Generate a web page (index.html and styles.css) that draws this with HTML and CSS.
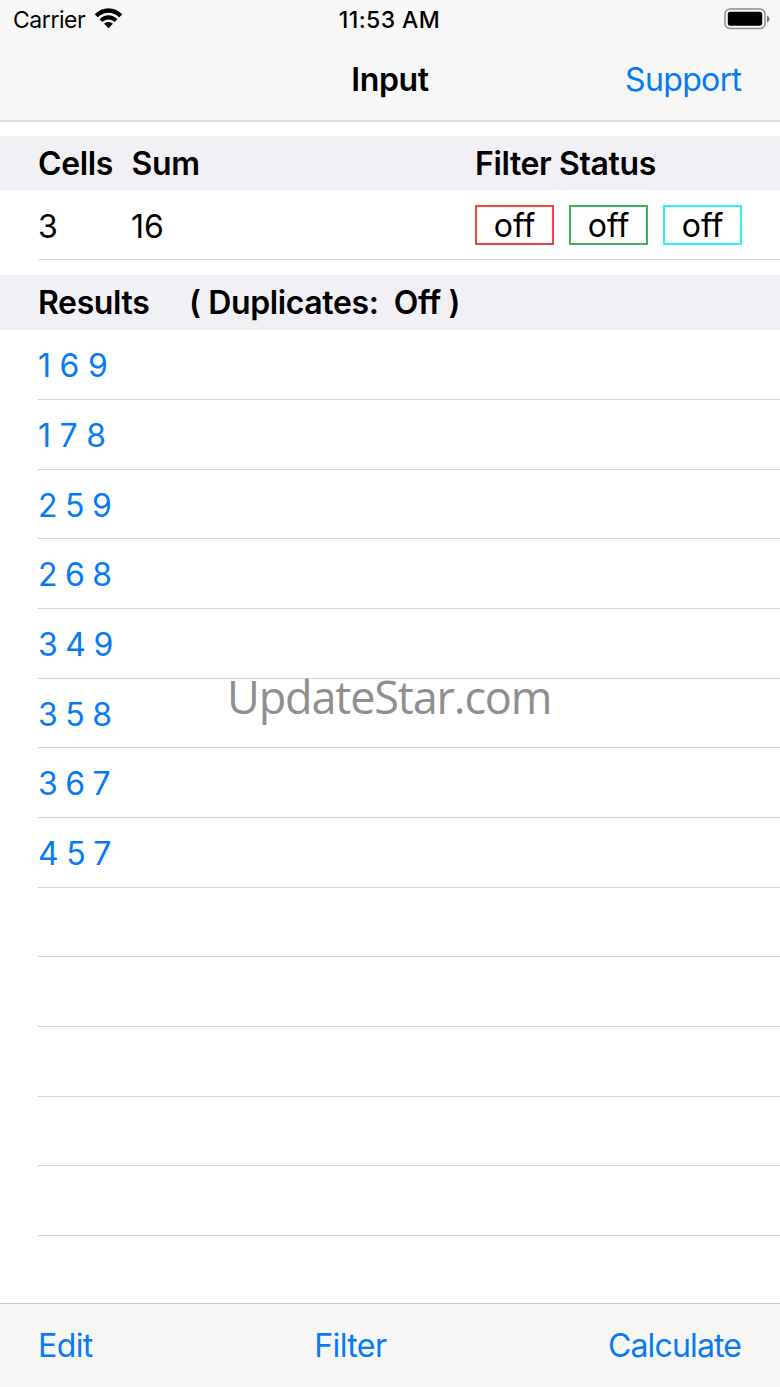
FILE: index.html
```html
<!DOCTYPE html>
<html lang="en">
<head>
<meta charset="utf-8">
<title>Input</title>
<link rel="stylesheet" href="styles.css">
</head>
<body>
<div class="screen">
  <header class="top">
    <div class="status">
      <div class="carrier"><span>Carrier</span>
        <svg class="wifi" width="29" height="21" viewBox="0 0 30 22"><path d="M.6 6.6C8.7-1.9 21.3-1.9 29.4 6.6L26.2 9.9C19.8 3.4 10.2 3.4 3.8 9.9Z"/><path d="M5.6 11.7C10.8 6.3 19.2 6.3 24.4 11.7L21.4 14.7C17.8 11.2 12.2 11.2 8.6 14.7Z"/><path d="M10.4 16.6C13 14 17 14 19.6 16.6L15 21.2Z"/></svg>
      </div>
      <div class="clock">11:53 AM</div>
      <svg class="battery" width="47" height="22" viewBox="0 0 47 22"><rect x="1" y="1" width="40" height="19.5" rx="5" fill="none" stroke="#8e8e8e" stroke-width="1.5"/><rect x="3.8" y="3.8" width="34.4" height="14" rx="2.5"/><path d="M43 7.5Q45.6 8.5 45.6 11T43 14.5Z" fill="#7c7c7c"/></svg>
    </div>
    <nav class="nav"><h1 class="title">Input</h1><a class="support">Support</a></nav>
  </header>
  <main class="content">
    <div class="head"><span class="cells">Cells</span><span class="sum">Sum</span><span class="filters">Filter Status</span></div>
    <div class="input-row"><span class="cells">3</span><span class="sum">16</span>
      <div class="filters boxes"><span class="box red">off</span><span class="box green">off</span><span class="box cyan">off</span></div>
    </div>
    <div class="head results-head"><span class="results">Results</span><span class="dup">( Duplicates:&nbsp; Off )</span></div>
    <ul class="list">
      <li class="one">1 6 9</li><li class="one">1 7 8</li><li>2 5 9</li><li>2 6 8</li><li>3 4 9</li><li>3 5 8</li><li>3 6 7</li><li>4 5 7</li>
      <li></li><li></li><li></li><li></li><li></li>
    </ul>
  </main>
  <footer class="toolbar"><a class="edit">Edit</a><a class="filter">Filter</a><a class="calc">Calculate</a></footer>
  <div class="watermark">UpdateStar.com</div>
</div>
</body>
</html>
```
FILE: styles.css
```css
* { box-sizing: border-box; }
body { margin: 0; background: #fff; color: #000; font: 400 32px/1.2 Inter, sans-serif; }
.screen { position: relative; width: 780px; height: 1387px; overflow: hidden; display: flex; flex-direction: column; }
.top { height: 122px; flex: none; background: #f7f7f7; border-bottom: 2px solid #dcdcdd; }
.status { height: 40px; padding: 2px 9px 0 13px; display: grid; grid-template-columns: 1fr auto 1fr; align-items: center; font-size: 23px; }
.carrier { display: flex; align-items: center; gap: 9px; letter-spacing: -.45px; }
.wifi { margin-top: -5px; }
.clock { font-weight: 500; letter-spacing: .4px; margin-left: -5px; }
.battery { justify-self: end; margin-top: -4px; }
.nav { height: 80px; padding: 0 38px; display: grid; grid-template-columns: 1fr auto 1fr; align-items: center; }
.title { grid-column: 2; margin: 0; font-size: 32px; font-weight: 600; letter-spacing: -.4px; }
.support { justify-self: end; letter-spacing: -.65px; margin-right: .65px; }
.support, .toolbar, .list { color: #077af6; }
.content { flex: 1; padding-top: 14px; }
.head { height: 54px; padding: 2px 0 0 38px; display: flex; align-items: center; background: #f1f0f5; font-weight: 600; letter-spacing: -.38px; }
.cells { width: 93px; }
.head .sum { text-indent: .5px; }
.sum { width: 344px; }
.input-row { height: 70px; margin: 0 0 15px 38px; display: flex; align-items: center; border-bottom: 1px solid #d8d8d9; }
.input-row > .cells, .input-row > .sum { padding-top: 5px; }
.boxes { display: flex; gap: 15px; }
.box { width: 79px; height: 40px; border: 2px solid; padding-top: 3px; display: flex; align-items: center; justify-content: center; }
.box.red { border-color: #ea4a40; }
.box.green { border-color: #3cb45c; }
.box.cyan { border-color: #2deef5; }
.box { color: #000; }
.results-head { height: 55px; }
.results { width: 151px; }
.list { list-style: none; margin: 0; padding: .35px 0 0 38px; }
.list li { height: 69.67px; padding-top: 4px; border-bottom: 1px solid #d5d5d6; display: flex; align-items: center; letter-spacing: -.75px; }
.list .one { letter-spacing: -.2px; }
.toolbar { height: 84px; flex: none; border-top: 1px solid #c9c9ca; background: #f7f7f7; padding: 2px 38px 0; display: flex; justify-content: space-between; align-items: center; letter-spacing: -.6px; }
.calc { letter-spacing: -.85px; margin-right: .85px; }
.watermark { position: absolute; left: 227px; top: 665px; font: 45px/64px "Open Sans", sans-serif; letter-spacing: -1.15px; color: #8f8f8f; white-space: nowrap; }
```
